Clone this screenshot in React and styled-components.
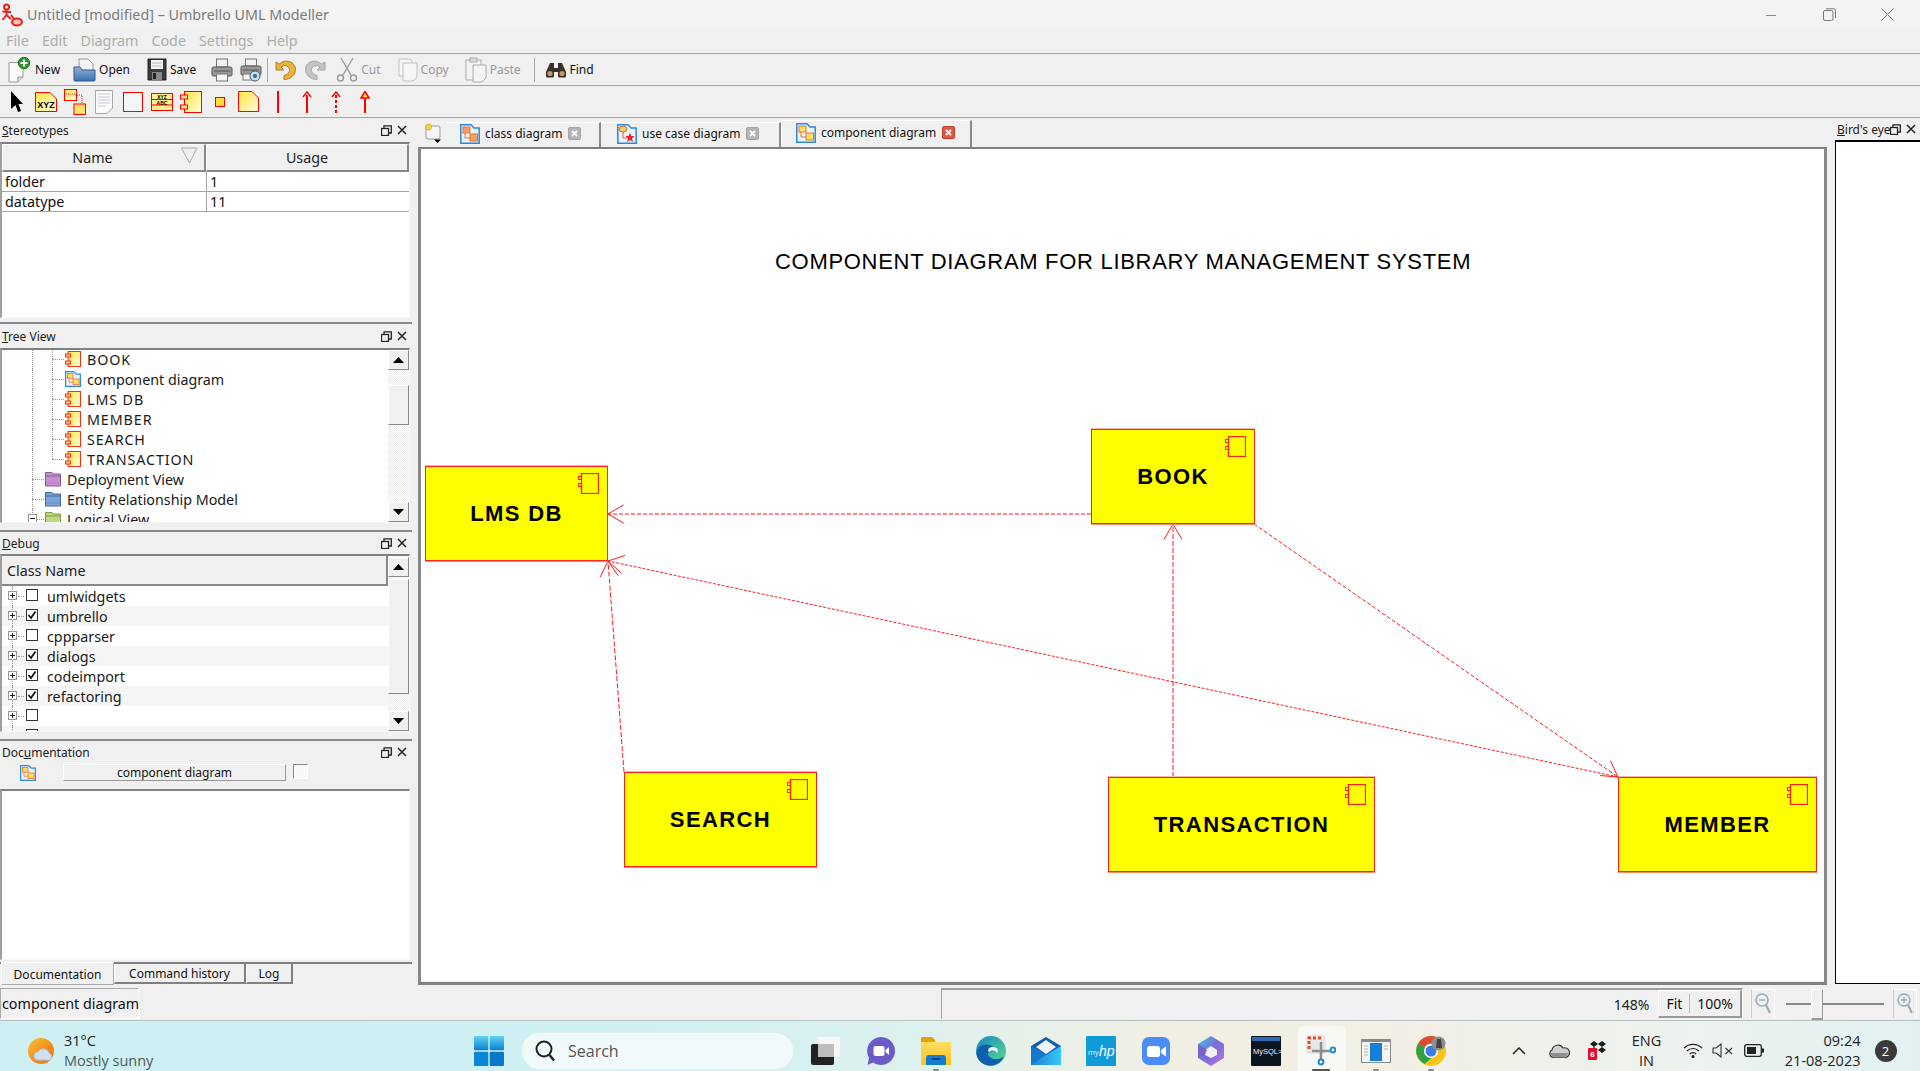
import React from "react";
import styled, { createGlobalStyle } from "styled-components";

const Global = createGlobalStyle`
  html, body { margin: 0; padding: 0; background: #f0f0f0; overflow: hidden; }
  * { box-sizing: border-box; }
  #root { width: 1920px; height: 1071px; }
`;
const UI = `"Noto Sans", "Open Sans", sans-serif`;

/* ---------- shell ---------- */
const Shell = styled.div`
  width: 1920px; height: 1071px; display: flex; flex-direction: column;
  background: #f0f0f0; font-family: ${UI}; color: #111; overflow: hidden; position: relative;
`;
const TitleBar = styled.div`
  height: 29px; display: flex; align-items: center; background: #f3f3f3; padding-right: 4px;
`;
const TitleText = styled.span`font-size: 14.3px; color: #7b7b7b; margin-left: 4px; white-space: nowrap;`;
const WindowControls = styled.div`display: flex; margin-left: auto;`;
const WinCell = styled.div`width: 58px; height: 29px; display: flex; align-items: center; justify-content: center;`;
const MenuBar = styled.div`
  height: 25px; display: flex; align-items: center; gap: 13px; padding: 0 0 1px 6px;
  border-bottom: 1px solid #a3a3a3; background: #f0f0f0;
`;
const MenuItem = styled.span`font-size: 14.3px; color: #adadad;`;
const Toolbar = styled.div`
  height: 32px; display: flex; align-items: center; padding-left: ${p => p.$pl || 0}px;
  border-bottom: 1px solid #a3a3a3; flex: none;
`;
const ToolAction = styled.div`
  display: flex; align-items: center; gap: 3px; margin-left: ${p => p.$ml || 0}px;
  font-size: 12px; color: ${p => (p.$off ? "#9a9a9a" : "#111")}; white-space: nowrap;
`;
const ToolSep = styled.div`width: 1px; height: 24px; background: #a8a8a8; margin-left: ${p => p.$ml}px;`;
const ToolSlot = styled.div`width: 29px; height: 30px; display: flex; align-items: center; justify-content: center;`;

const Workspace = styled.div`height: 867px; display: flex; flex: none;`;

/* ---------- docks ---------- */
const LeftDock = styled.div`width: 412px; display: flex; flex-direction: column; flex: none;`;
const DockTitle = styled.div`
  height: ${p => p.$h || 24}px; display: flex; align-items: center; padding: 0 ${p => p.$pr || 5}px 0 2px; font-size: 12px; color: #222; flex: none;
  u { text-underline-offset: 1px; }
`;
const DockName = styled.span`flex: 1; min-width: 0; overflow: hidden; white-space: nowrap;`;
const DockBtns = styled.div`display: flex; align-items: center; gap: 5px; flex: none;`;
const Pane = styled.div`
  height: ${p => p.$h}px; flex: none; background: #fff; display: flex; overflow: hidden; position: relative;
  border-top: 2px solid #808080; border-left: 2px solid #a0a0a0; border-right: 1px solid #f8f8f8; border-bottom: 1px solid #f8f8f8;
  margin-right: 2px;
`;
const Splitter = styled.div`
  height: ${p => p.$h}px; flex: none; border-bottom: 2px solid #8a8a8a;
`;
const THead = styled.div`display: grid; grid-template-columns: 204px 1fr; height: 28px; flex: none;`;
const TH = styled.div`
  background: #f0f0f0; font-size: 14.3px; display: flex; align-items: center; justify-content: center; position: relative;
  padding-right: ${p => p.$pr || 0}px;
  border-right: 2px solid #888; border-bottom: 2px solid #888; border-left: 1px solid #fff; border-top: 1px solid #fff; color: #222;
`;
const SortMark = styled.svg`position: absolute; right: 6px; top: 2px;`;
const TRow = styled.div`display: grid; grid-template-columns: 204px 1fr; height: 20px; border-bottom: 1px solid #a5a5a5; font-size: 14.3px; flex: none;`;
const TD = styled.div`padding-left: 3px; line-height: 19px; & + & { border-left: 1px solid #a5a5a5; }`;
const Col = styled.div`flex: 1; min-width: 0; display: flex; flex-direction: column;`;
const TreeBody = styled.div`flex: 1; margin-top: ${p => p.$mt ?? -1}px; min-width: 0; overflow: hidden;`;
const TreeRow = styled.div`
  height: 20px; display: flex; align-items: center; gap: 6px; padding-left: ${p => p.$in}px; font-size: 14.3px; color: #1a1a1a; white-space: nowrap; position: relative;
  letter-spacing: ${p => (p.$caps ? "0.9px" : "0")};
  background: ${p => (p.$alt ? "#f5f5f5" : "transparent")};
`;
const DebugLabel = styled.span`margin-left: 3px;`;
const Dotted = styled.i`
  position: absolute; left: ${p => p.$x}px; top: 0; bottom: ${p => (p.$end ? 10 : 0)}px; border-left: 1px dotted #999;
`;
const Tick = styled.i`
  position: absolute; left: ${p => p.$x}px; top: 10px; width: ${p => p.$w}px; border-top: 1px dotted #999;
`;
const Expander = styled.span`
  position: absolute; left: ${p => p.$x}px; top: 5px; width: 9px; height: 9px; border: 1px solid #999; background: #fff;
  &::before { content: ""; position: absolute; left: 1px; right: 1px; top: 3px; height: 1px; background: #222; }
  &::after { content: ""; display: ${p => (p.$open ? "none" : "block")}; position: absolute; top: 1px; bottom: 1px; left: 3px; width: 1px; background: #222; }
`;
const Check = styled.span`
  width: 12px; height: 12px; border: 1px solid #333; background: #fff; display: flex; align-items: center; justify-content: center; flex: none; margin-top: -2px;
`;
const ScrollBar = styled.div`
  width: 21px; flex: none; display: flex; flex-direction: column; align-items: stretch;
  background: repeating-conic-gradient(#fff 0 25%, #ececec 0 50%) 0 0 / 2px 2px;
`;
const ScrollBtn = styled.div`
  height: 20px; flex: none; display: flex; align-items: center; justify-content: center; background: #f0f0f0;
  border-top: 1px solid #fff; border-left: 1px solid #fff; border-right: 1px solid #888; border-bottom: 1px solid #888; margin-top: ${p => p.$mt || 0}px;
`;
const Thumb = styled.div`
  height: ${p => p.$h}px; flex: none; margin-top: ${p => p.$mt}px; background: #f0f0f0;
  border-top: 1px solid #fff; border-left: 1px solid #fff; border-right: 1px solid #888; border-bottom: 1px solid #888;
`;
const Fill = styled.div`flex: 1;`;
const DebugHead = styled.div`
  height: 30px; flex: none; background: #f0f0f0; font-size: 14.3px; padding-left: 5px; display: flex; align-items: center; color: #222;
  border-right: 2px solid #888; border-bottom: 2px solid #888;
`;
const DocHead = styled.div`height: 26px; flex: none; display: flex; align-items: flex-start; padding-top: 1px;`;
const DocIcon = styled.div`width: 16px; height: 17px; margin-left: 20px;`;
const DocBtn = styled.div`
  width: 223px; height: 17px; margin-left: 27px; font-size: 12px; line-height: 16px; text-align: center; color: #111;
  border-top: 1px solid #fff; border-left: 1px solid #fff; border-right: 1px solid #999; border-bottom: 1px solid #999;
`;
const DocCheck = styled.div`width: 15px; height: 15px; margin-left: 7px; background: #f8f8f8; border-top: 1px solid #888; border-left: 1px solid #888; border-right: 1px solid #fff; border-bottom: 1px solid #fff;`;
const BottomTabs = styled.div`
  height: 25px; flex: none; display: flex; align-items: flex-start; margin-top: 2px; border-top: 2px solid #808080; padding-left: 1px;
`;
const BottomTab = styled.div`
  height: ${p => (p.$on ? 23 : 20)}px; width: ${p => p.$w}px; font-size: 12px; text-align: center; color: #111; background: #f0f0f0;
  line-height: ${p => (p.$on ? 23 : 19)}px; margin-top: ${p => (p.$on ? -2 : 0)}px;
  border-left: 1px solid #fff; border-right: 2px solid #808080; border-bottom: 2px solid #808080;
  border-top: ${p => (p.$on ? "1px solid #fff" : "none")};
  ${p => p.$on && "border-right: 1px solid #aaa; border-bottom: 1px solid #aaa;"}
`;

/* ---------- centre ---------- */
const Central = styled.div`width: 1410px; margin-left: 6px; flex: none; display: flex; flex-direction: column;`;
const TabBar = styled.div`height: 29px; flex: none; display: flex; align-items: flex-end; padding-left: 6px;`;
const CornerBtn = styled.div`width: 18px; height: 22px; margin: 0 5px 3px 0; flex: none;`;
const DocTab = styled.div`
  width: ${p => p.$w}px; height: ${p => (p.$on ? 27 : 25)}px; display: flex; align-items: center; flex: none; padding-left: ${p => p.$pl}px; gap: 5px;
  font-size: 12px; color: #111; white-space: nowrap; padding-bottom: 3px;
  border-right: 2px solid #8a8a8a; border-left: ${p => (p.$on ? "1px solid #fff" : "none")}; border-top: 1px solid #fff;
`;
const TabClose = styled.span`
  width: 13px; height: 13px; border-radius: 2px; background: ${p => (p.$on ? "#e25a45" : "#b5b5b5")}; margin-left: 1px;
  display: flex; align-items: center; justify-content: center; flex: none; border: 1px solid ${p => (p.$on ? "#c03b28" : "#a5a5a5")};
`;
const Canvas = styled.div`
  width: 1409px; height: 838px; position: relative; background: #fff; flex: none;
  border-left: 3px solid #888; border-top: 2px solid #808080; border-right: 3px solid #888; border-bottom: 3px solid #808080;
  box-shadow: inset 0 -1px 0 #eee; overflow: hidden;
`;
const Wires = styled.svg`position: absolute; left: 0; top: 0;`;
const DiagramTitle = styled.div`
  position: absolute; left: ${p => p.$x}px; top: ${p => p.$y}px; font-family: "Liberation Sans", Arial, sans-serif;
  font-size: 22px; letter-spacing: 0.7px; color: #000; white-space: nowrap;
`;
const UmlNode = styled.div`
  position: absolute; left: ${p => p.$x}px; top: ${p => p.$y}px; width: ${p => p.$w}px; height: ${p => p.$h}px;
  background: #ffff00; border: 1px solid #ff1f1f; box-shadow: 0 1px 0 #ff8a70, 0 -1px 0 #ffb0b0;
  display: flex; align-items: center; justify-content: center;
  font-family: "Liberation Sans", Arial, sans-serif; font-weight: 700; font-size: 22px; letter-spacing: 1.4px; color: #000; white-space: nowrap;
`;
const NodeGlyph = styled.svg`position: absolute; right: 8px; top: 6px;`;

const RightDock = styled.div`flex: 1; min-width: 0; margin-left: 7px; display: flex; flex-direction: column;`;
const BirdPane = styled.div`flex: 1; background: #fff; border: 1px solid #000; border-right: none; margin-bottom: 1px; border-top: 2px solid #000;`;

/* ---------- status ---------- */
const StatusBar = styled.div`height: 35px; flex: none; display: flex; align-items: center; padding-top: 1px;`;
const StatusLabel = styled.div`
  width: 139px; height: 31px; font-size: 14.3px; line-height: 29px; padding-left: 1px; white-space: nowrap; color: #111;
  border-top: 1px solid #aaa; border-left: 1px solid #aaa; border-right: 1px solid #fff; border-bottom: 1px solid #fff;
`;
const StatusGroup = styled.div`
  width: 802px; height: 31px; margin-left: 802px; display: flex; align-items: center; justify-content: flex-end; font-size: 14px; padding-right: 0;
  border-top: 2px solid #a0a0a0; border-left: 1px solid #a0a0a0; border-right: 1px solid #fff;
`;
const Percent = styled.span`margin-right: 9px; color: #222;`;
const ZoomBtns = styled.div`display: flex; height: 28px; align-items: center; border-right: 2px solid #999; border-bottom: 2px solid #999; border-top: 1px solid #fff; border-left: 1px solid #fff;`;
const ZoomBtn = styled.span`padding: 0 7px; & + & { border-left: 1px solid #bbb; }`;
const ZoomIconBtn = styled.div`
  width: ${p => p.$w}px; height: 29px; margin-left: ${p => p.$ml}px; display: flex; align-items: center; justify-content: center;
  border-left: 1px solid #ccc; border-right: 1px solid #fff; border-top: 1px solid #fff; flex: none;
`;
const ZoomSlider = styled.div`
  width: 100px; height: 29px; margin-left: 9px; position: relative; flex: none;
  &::before { content: ""; position: absolute; left: 2px; right: 0; top: 14px; height: 2px; background: #888; }
`;
const SliderKnob = styled.div`position: absolute; left: 27px; top: 0; width: 12px; height: 31px; background: #f0f0f0; border: 1px solid #fff; border-right-color: #999; border-bottom: 2px solid #999;`;

/* ---------- taskbar ---------- */
const Taskbar = styled.div`
  height: 51px; flex: none; display: flex; align-items: center; padding-top: 9px;
  background: linear-gradient(90deg, #cff0f3 0%, #d0f0f3 36%, #def1ee 48%, #f1efe3 60%, #f2efe5 72%, #edf2ee 88%, #e1f1f2 100%);
  border-top: 1px solid #b6c2c2;
`;
const Weather = styled.div`width: 474px; flex: none; display: flex; align-items: center; padding-left: 27px; gap: 9px;`;
const WeatherText = styled.div`display: flex; flex-direction: column; font-size: 14.5px; line-height: 20px; font-family: "Open Sans", sans-serif;`;
const WeatherTemp = styled.span`color: #222;`;
const WeatherSub = styled.span`color: #4a5a5e;`;
const SearchBox = styled.div`
  width: 273px; height: 38px; margin-left: 17px; border-radius: 19px; background: #f1fafa; border: 1px solid #e2efef; flex: none;
  display: flex; align-items: center; padding-left: 12px; gap: 12px; font-size: 16px; color: #555; font-family: "Open Sans", sans-serif;
`;
const AppRow = styled.div`display: flex; margin: -9px 0 0 4.5px; flex: none;`;
const AppCell = styled.div`
  width: 55px; height: 50px; display: flex; align-items: center; justify-content: center; position: relative; padding-top: 9px;
  ${p => p.$on && "&::before { content: ''; position: absolute; left: 4px; right: 3px; top: 5px; bottom: 0; background: #f8f8f4; border-radius: 5px 5px 0 0; }"}
  svg { position: relative; }
`;
const RunDot = styled.i`
  position: absolute; left: 50%; bottom: 0; width: ${p => (p.$wide ? 18 : 6)}px; height: 2px; margin-left: ${p => (p.$wide ? -9 : -3)}px; background: ${p => (p.$wide ? "#555" : "#888")}; border-radius: 1px;
`;
const TrayCell = styled.div`
  width: ${p => p.$w}px; margin-left: ${p => p.$ml || 0}px; flex: none; display: flex; flex-direction: column; align-items: ${p => p.$end ? "flex-end" : "center"}; justify-content: center;
  font-size: 14.5px; line-height: 20px; color: #222; font-family: "Open Sans", sans-serif;
`;
const Badge = styled.div`width: 22px; height: 22px; border-radius: 50%; background: #3a3a3a; color: #fff; font-size: 13px; line-height: 22px; text-align: center;`;

/* ---------- icons ---------- */
const Defs = () => (
  <svg width="0" height="0" style={{ position: "absolute" }}>
    <defs>
      <linearGradient id="gy" x1="0" y1="0" x2="1" y2="1"><stop offset="0" stopColor="#ffe640" /><stop offset="1" stopColor="#fffde0" /></linearGradient>
      <linearGradient id="gblue" x1="0" y1="0" x2="0" y2="1"><stop offset="0" stopColor="#8db4dc" /><stop offset="1" stopColor="#3f70a8" /></linearGradient>
      <linearGradient id="gedge" x1="0" y1="0" x2="1" y2="1"><stop offset="0" stopColor="#1a86c8" /><stop offset="1" stopColor="#5be08a" /></linearGradient>
      <linearGradient id="gfold" x1="0" y1="0" x2="0" y2="1"><stop offset="0" stopColor="#ffdd66" /><stop offset="1" stopColor="#fcc31c" /></linearGradient>
      <linearGradient id="gstart" x1="0" y1="0" x2="0" y2="1"><stop offset="0" stopColor="#5fd3f5" /><stop offset="1" stopColor="#0a7fd0" /></linearGradient>
      <linearGradient id="gsun" x1="0" y1="0" x2="1" y2="1"><stop offset="0" stopColor="#f8c030" /><stop offset="1" stopColor="#f06a10" /></linearGradient>
      <linearGradient id="gcop" x1="0" y1="0" x2="1" y2="1"><stop offset="0" stopColor="#3ec8e8" /><stop offset=".5" stopColor="#7a6ad8" /><stop offset="1" stopColor="#c07ad8" /></linearGradient>
      <linearGradient id="gmail" x1="0" y1="0" x2="1" y2="0"><stop offset="0" stopColor="#1a80d8" /><stop offset="1" stopColor="#38c8f8" /></linearGradient>
    </defs>
  </svg>
);
const AppLogo = () => (
  <svg width="22" height="24" viewBox="0 0 22 24" fill="none" stroke="#e8231f" strokeWidth="2" style={{ marginLeft: 1 }}>
    <circle cx="5.5" cy="4" r="2.5" /><path d="M5.5 6.5 V12 M1.5 8.5 L10 9 M5.5 12 L1.5 17 M5.5 12 L10 16" />
    <ellipse cx="16" cy="19" rx="5" ry="3.5" fill="#ffc0b0" /><path d="M10 12 L13 16" />
  </svg>
);
const MinGlyph = () => <svg width="12" height="12"><path d="M1 6.5H11" stroke="#888" /></svg>;
const RestoreGlyph = () => <svg width="13" height="13" fill="none" stroke="#777"><rect x="0.5" y="2.5" width="9.5" height="10" rx="1.5" /><path d="M3 .8H10.5A2 2 0 0 1 12.5 2.8V10" /></svg>;
const CloseGlyph = () => <svg width="13" height="13"><path d="M.5.5 12.5 12.5M12.5.5.5 12.5" stroke="#777" /></svg>;
const NewIc = () => (
  <svg width="24" height="26" viewBox="0 0 24 26"><path d="M1 5.5H15V20L10 25H1Z" fill="#fafafa" stroke="#999" /><path d="M10 25V20H15" fill="#ddd" stroke="#999" /><circle cx="16" cy="6" r="5.7" fill="#2d9a30" stroke="#1d7020" /><path d="M16 2.5V9.5M12.5 6H19.5" stroke="#fff" strokeWidth="2" /></svg>
);
const OpenIc = () => (
  <svg width="23" height="24" viewBox="0 0 23 24"><path d="M6 1H15L20 6V14H6Z" fill="#f4f4f4" stroke="#9a9a9a" /><path d="M1 9H7L9 12H22V22A1 1 0 0 1 21 23H2A1 1 0 0 1 1 22Z" fill="url(#gblue)" stroke="#2d5a90" /></svg>
);
const SaveIc = () => (
  <svg width="20" height="23" viewBox="0 0 20 23"><path d="M1 1H19V22H1Z" fill="#3a3a3a" stroke="#222" /><rect x="4" y="2" width="12" height="9" fill="#f4f4f4" /><path d="M5 5H15M5 8H15" stroke="#bbb" /><rect x="5" y="14" width="10" height="8" fill="#888" /><rect x="6" y="15" width="3" height="6" fill="#222" /></svg>
);
const PrintIc = () => (
  <svg width="22" height="24" viewBox="0 0 22 24"><rect x="5.5" y="1" width="11" height="8" fill="#f2f2f2" stroke="#777" /><rect x="1" y="9" width="20" height="9" rx="1.5" fill="#999" stroke="#555" /><path d="M3 13H19" stroke="#555" /><rect x="5.5" y="16" width="11" height="7" fill="#f6f6f6" stroke="#777" /></svg>
);
const PreviewIc = () => (
  <svg width="22" height="24" viewBox="0 0 22 24"><rect x="5.5" y="1" width="11" height="7" fill="#f2f2f2" stroke="#777" /><rect x="1" y="8" width="20" height="9" rx="1.5" fill="#999" stroke="#555" /><path d="M3 12H19" stroke="#555" /><rect x="3" y="16" width="10" height="6" fill="#f6f6f6" stroke="#777" /><circle cx="15" cy="18" r="5" fill="#cfe4f0" stroke="#456" /><circle cx="15" cy="18" r="2.2" fill="#2a78b8" /></svg>
);
const GrayFlip = styled.svg`transform: ${p => (p.$flip ? "scaleX(-1)" : "none")};`;
const UndoIc = ({ gray }) => (
  <GrayFlip $flip={gray} width="23" height="22" viewBox="0 0 23 22">
    <path d="M2 3V11H10L7 8C10 5.500 15 6.500 15.500 10.500C15.900 13.500 13 16 10 16.500V20.500C16 20.500 21.500 16.500 21.500 10.500C21.500 3 12 -1 5.500 5Z" fill={gray ? "#c4c4c4" : "#eab23c"} stroke={gray ? "#a8a8a8" : "#b5801a"} />
  </GrayFlip>
);
const CutIc = () => (
  <svg width="22" height="26" viewBox="0 0 22 26" fill="none" stroke="#9a9a9a" strokeWidth="1.4"><path d="M5 1 15 18M17 1 7 18" /><circle cx="4.500" cy="21" r="3" /><circle cx="17.500" cy="21" r="3" /></svg>
);
const CopyIc = () => (
  <svg width="20" height="24" viewBox="0 0 20 24" fill="#f6f6f6" stroke="#c0c0c0"><path d="M1 1H12L14 3V18H1Z" /><path d="M5 5H19V19L15 23H5Z" /></svg>
);
const PasteIc = () => (
  <svg width="22" height="26" viewBox="0 0 22 26" fill="#f4f4f4" stroke="#aaa"><rect x="1" y="3" width="15" height="20" /><rect x="5" y="1" width="7" height="4" fill="#ddd" /><path d="M8 8H21V21L17 25H8Z" /></svg>
);
const BinocIc = () => (
  <svg width="22" height="16" viewBox="0 0 22 16"><path d="M5 1H9V6H13V1H17L21 10V14A1.500 1.500 0 0 1 19.500 15.500H14.500A1.500 1.500 0 0 1 13 14V10H9V14A1.500 1.500 0 0 1 7.500 15.500H2.500A1.500 1.500 0 0 1 1 14V10Z" fill="#3b3028" /><circle cx="5" cy="11.500" r="2.600" fill="#c49a6a" /><circle cx="17" cy="11.500" r="2.600" fill="#c49a6a" /></svg>
);
const Pointer = () => <svg width="12" height="21" viewBox="0 0 12 21"><path d="M0 0 12 13H7.500L10 20 7 21 4.500 14 0 18Z" fill="#000" /></svg>;
const NoteXYZ = () => (
  <svg width="22" height="20" viewBox="0 0 22 20"><path d="M.5 .5H15L21.500 7V19.500H.5Z" fill="url(#gy)" stroke="#f00" /><text x="11" y="16" textAnchor="middle" fontFamily="Liberation Sans" fontWeight="700" fontSize="9" fill="#000">XYZ</text></svg>
);
const ObjPair = () => (
  <svg width="22" height="26" viewBox="0 0 22 26"><rect x=".5" y=".5" width="12" height="11" fill="url(#gy)" stroke="#f00" /><rect x="10" y="15" width="11.500" height="10.500" fill="#ffe070" stroke="#f00" /><path d="M2 5H11M11 6H18V14" stroke="#d22" strokeDasharray="1 1" fill="none" /></svg>
);
const GrayNote = () => <svg width="18" height="24" viewBox="0 0 18 24"><path d="M.5 .5H17.500V18L12 23.500H.5Z" fill="#fafafa" stroke="#a8a8a8" /><path d="M3 4H15M3 7H15M3 10H15M3 13H15M3 16H11" stroke="#ccd" /></svg>;
const RedBox = () => <svg width="20" height="20"><rect x=".5" y=".5" width="19" height="19" fill="#f5f5f5" stroke="#f00" /></svg>;
const ClassBox = () => (
  <svg width="22" height="18" viewBox="0 0 22 18"><rect x=".5" y=".5" width="21" height="17" fill="#ffef90" stroke="#f00" /><path d="M.5 6.500H21.500M.5 12H21.500" stroke="#f00" /><text x="11" y="5.500" textAnchor="middle" fontSize="5" fontWeight="700" fontFamily="Liberation Sans">XYZ</text><text x="11" y="11.500" textAnchor="middle" fontSize="5" fontWeight="700" fontFamily="Liberation Sans">ABC</text></svg>
);
const CompBig = () => (
  <svg width="22" height="22" viewBox="0 0 22 22"><rect x="4.500" y=".5" width="17" height="21" fill="url(#gy)" stroke="#f00" /><rect x=".5" y="4" width="7" height="4" fill="#ffe090" stroke="#f00" /><rect x=".5" y="14" width="7" height="4" fill="#ffe090" stroke="#f00" /></svg>
);
const SmallSq = () => <svg width="10" height="10"><rect x=".5" y=".5" width="9" height="9" fill="#ffdc40" stroke="#f00" /></svg>;
const FoldNote = () => <svg width="21" height="21" viewBox="0 0 21 21"><path d="M.5 .5H14L20.500 7V20.500H.5Z" fill="url(#gy)" stroke="#f00" /></svg>;
const RedLine = () => <svg width="4" height="22"><path d="M2 0V22" stroke="#f00" strokeWidth="2" /></svg>;
const RedArrow = ({ dash, tri }) => (
  <svg width="12" height="22" viewBox="0 0 12 22" fill="none" stroke="#f00">
    <path d="M6 4V22" strokeWidth="2" strokeDasharray={dash ? "3 2" : undefined} />
    {tri ? <path d="M6 .5 10 7H2Z" fill="#ffdc40" strokeWidth="1.500" /> : <path d="M2 6 6 1 10 6" strokeWidth="1.500" />}
  </svg>
);
const MiniDock = () => (
  <DockBtns>
    <svg width="11" height="11" fill="none" stroke="#222"><rect x=".5" y="3.500" width="7" height="7" strokeWidth="1.300" /><path d="M3 3V.8H10.300V8H8" strokeWidth="1.300" /></svg>
    <svg width="10" height="10"><path d="M1 1 9 9M9 1 1 9" stroke="#222" strokeWidth="1.500" /></svg>
  </DockBtns>
);
const DiagramIc = ({ s = 20, kind = "comp" }) => (
  <svg width={s} height={s} viewBox="0 0 20 20">
    <path d="M.8 .8H11L14 4H19.200V19.200H.8Z" fill="#e8f4fc" stroke="#2b88dc" strokeWidth="1.500" />
    {kind === "use" ? (
      <>
        <ellipse cx="6" cy="5" rx="4" ry="3" fill="#f2cf60" stroke="#d06a2a" />
        <path d="M6 8V14H10" stroke="#e55" fill="none" />
        <path d="M13 9 14.500 12H17.500L15 14.500 16 18 13 16 10 18 11 14.500 8.500 12H11.500Z" fill="#f02020" />
      </>
    ) : (
      <>
        <rect x="3" y="3" width="7" height="6" fill={kind === "class" ? "#f0a070" : "#ffe060"} stroke="#f0702a" />
        <rect x="10" y="10" width="7.500" height="7" fill={kind === "class" ? "#f0a070" : "#ffe060"} stroke="#f0702a" />
        <path d="M5 9V14H10" stroke="#f0702a" fill="none" />
      </>
    )}
  </svg>
);
const TreeComp = () => (
  <svg width="16" height="16" viewBox="0 0 16 16"><rect x="3" y=".5" width="12.500" height="15" fill="url(#gy)" stroke="#f0361a" /><rect x=".5" y="3" width="5" height="3" fill="#ffc080" stroke="#f0361a" /><rect x=".5" y="10" width="5" height="3" fill="#ffc080" stroke="#f0361a" /></svg>
);
const Folder = ({ c, d }) => (
  <svg width="16" height="16" viewBox="0 0 16 16"><path d="M.5 1.500H7L8 3H15.500V15H.5Z" fill={c} stroke={d} /><path d="M.5 5H15.500" stroke={d} /><path d="M.5 12H15.500" stroke={d} opacity=".3" /></svg>
);
const Up = () => <svg width="11" height="6"><path d="M5.500 0 11 6H0Z" fill="#000" /></svg>;
const Down = () => <svg width="11" height="6"><path d="M5.500 6 11 0H0Z" fill="#000" /></svg>;
const Tick2 = () => <svg width="10" height="10"><path d="M1.500 5 4 8 8.500 1.500" fill="none" stroke="#111" strokeWidth="1.800" /></svg>;
const TabX = () => <svg width="7" height="7"><path d="M1 1 6 6M6 1 1 6" stroke="#fff" strokeWidth="1.800" /></svg>;
const Lens = ({ plus }) => (
  <svg width="16" height="22" viewBox="0 0 16 22" fill="none" stroke="#a0a8b0" strokeWidth="1.500"><circle cx="7" cy="7" r="6" fill="#eef2f6" /><path d="M4 7H10" />{plus && <path d="M7 4V10" />}<path d="M11 12 15 20" strokeWidth="2.200" /></svg>
);
const CornerIc = () => (
  <svg width="18" height="22" viewBox="0 0 18 22"><rect x="2" y="4" width="14" height="13" rx="2" fill="#f6f6f6" stroke="#999" /><circle cx="4.500" cy="5" r="3" fill="#f4d34a" stroke="#d8b030" /><path d="M10 17.500H17L13.500 21Z" fill="#000" /></svg>
);

/* taskbar icons */
const SunIc = () => (
  <svg width="28" height="28" viewBox="0 0 28 28"><circle cx="14" cy="14" r="13" fill="url(#gsun)" /><path d="M11 23A4 4 0 0 1 11 15 6 6 0 0 1 22 16 4 4 0 0 1 23 23Z" fill="#cfe0f4" stroke="#a7c3e8" /></svg>
);
const StartIc = () => (
  <svg width="30" height="30"><rect x="0" y="0" width="14.300" height="14.300" fill="url(#gstart)" rx="1" /><rect x="15.700" y="0" width="14.300" height="14.300" fill="url(#gstart)" rx="1" /><rect x="0" y="15.700" width="14.300" height="14.300" fill="#0c86d8" rx="1" /><rect x="15.700" y="15.700" width="14.300" height="14.300" fill="#0a78c8" rx="1" /></svg>
);
const Glass = () => <svg width="22" height="24" viewBox="0 0 22 24" fill="none" stroke="#222" strokeWidth="2"><circle cx="10" cy="10" r="7.500" /><path d="M15.500 16 20 21.500" strokeWidth="2.500" /></svg>;
const TaskView = () => (
  <svg width="30" height="30"><rect x="0" y="8" width="23" height="21" rx="2" fill="#222" /><rect x="7" y="1" width="22" height="20" rx="1" fill="#f6f6f6" /><rect x="7" y="8" width="16" height="13" fill="#bdbdbd" /></svg>
);
const ChatIc = () => (
  <svg width="30" height="30" viewBox="0 0 30 30"><path d="M15 1A14 14 0 1 1 7 26.500L1.500 29 3 22A14 14 0 0 1 15 1Z" fill="#6b5bc8" /><rect x="7.500" y="10" width="11" height="10" rx="2" fill="#fff" /><path d="M19.500 14 23 11V19L19.500 16Z" fill="#fff" /></svg>
);
const FolderIc = () => (
  <svg width="30" height="28" viewBox="0 0 30 28"><path d="M0 1A1 1 0 0 1 1 0H11L14 3V9H0Z" fill="#e2a308" /><path d="M0 5H29A1 1 0 0 1 30 6V27A1 1 0 0 1 29 28H1A1 1 0 0 1 0 27Z" fill="url(#gfold)" /><path d="M5 21A3 3 0 0 1 8 18H22A3 3 0 0 1 25 21V28H5Z" fill="#0f7ed0" /><rect x="11" y="21" width="8" height="2" fill="#0c3d78" /></svg>
);
const EdgeIc = () => (
  <svg width="30" height="30" viewBox="0 0 30 30"><circle cx="15" cy="15" r="15" fill="url(#gedge)" /><path d="M0.500 17C1.500 8 9 8 13 9 20 10 18 16 14 16 11 16 11 20 15 22 20 24.500 25 23 28 20 25 28 17 31 10 29 4 27 .5 22 .5 17Z" fill="#0e5faf" /><path d="M13 16C10.500 13 14 11 17 11 22 11 23 15 21 17 20 14 16 13.500 13 16Z" fill="#e9f6f4" /></svg>
);
const MailIc = () => (
  <svg width="30" height="28" viewBox="0 0 30 28"><path d="M15 0 30 9V28H0V9Z" fill="#0f5fae" /><path d="M5 10 15 3 25 10 15 17Z" fill="#f2f6fa" /><path d="M0 9 15 18 30 9V28H0Z" fill="url(#gmail)" /><path d="M0 28 15 18 0 9Z" fill="#1478d0" /></svg>
);
const HpIc = () => (
  <svg width="30" height="30"><rect width="30" height="30" rx="1" fill="#0f9ad8" /><text x="2" y="19" fontSize="8" fontFamily="Liberation Sans" fill="#d8f0fa">my</text><text x="13" y="20" fontSize="14" fontStyle="italic" fontFamily="Liberation Sans" fill="#fff">hp</text></svg>
);
const ZoomIc = () => (
  <svg width="28" height="28"><rect width="28" height="28" rx="7" fill="#4a8cfa" /><rect x="5" y="9" width="13" height="11" rx="2.500" fill="#fff" /><path d="M19 13 24 9.500V19.500L19 16Z" fill="#fff" /></svg>
);
const CopilotIc = () => (
  <svg width="28" height="30" viewBox="0 0 28 30"><path d="M14 0 27 8V22L14 30 1 22V8Z" fill="url(#gcop)" /><path d="M14 10 20 14V19L14 22 8 19V14Z" fill="#eef2f0" /><path d="M1 8 10 14 8 19 1 22Z" fill="#7a5ac8" opacity=".8" /></svg>
);
const MysqlIc = () => (
  <svg width="30" height="30"><rect width="30" height="30" rx="1" fill="#0b1520" /><rect x="1" y="1" width="28" height="4" fill="#2a6ab0" /><text x="2" y="18" fontSize="7.500" fontFamily="Liberation Sans" fill="#eee">MySQL&gt;</text></svg>
);
const SnipIc = () => (
  <svg width="30" height="32" viewBox="0 0 30 32" fill="none"><rect x="0" y="0" width="20" height="19" rx="3" fill="#e4e8ea" /><path d="M3 14V3H15" stroke="#e54a20" strokeWidth="3" strokeDasharray="3 2" /><path d="M15 7V24M6 16H25" stroke="#8a8f94" strokeWidth="2.500" /><circle cx="27" cy="15" r="2.400" stroke="#1a8ad8" strokeWidth="2" /><circle cx="15" cy="27" r="2.400" stroke="#1a8ad8" strokeWidth="2" /></svg>
);
const BlueWin = () => (
  <svg width="30" height="24"><rect x=".5" y=".5" width="29" height="23" fill="#f4f4f4" stroke="#8a8a8a" /><rect x="1" y="1" width="28" height="2" fill="#8a8a8a" /><rect x="9" y="4" width="12" height="18" fill="#1680d8" /><path d="M3 7H7M3 10H7M3 13H7M3 16H7M23 7H27M23 10H27" stroke="#b5b5b5" /></svg>
);
const ChromeIc = () => (
  <svg width="30" height="30" viewBox="0 0 30 30"><circle cx="15" cy="15" r="15" fill="#f5c518" /><path d="M15 0A15 15 0 0 1 28 7.500H15A7.500 7.500 0 0 0 8.500 11.200L2 7.500A15 15 0 0 1 15 0Z" fill="#dd4b38" /><path d="M2 7.500 8.500 11.200 15 22.500 8.500 28A15 15 0 0 1 2 7.500Z" fill="#2ea24a" /><circle cx="15" cy="15" r="7" fill="#fff" /><circle cx="15" cy="15" r="5.500" fill="#3b7de8" /><circle cx="22.500" cy="7.500" r="7" fill="#8a8f90" /><path d="M21 3H25L26 12H20Z" fill="#4a4038" /></svg>
);
const Chevron = () => <svg width="14" height="8"><path d="M1 7 7 1 13 7" fill="none" stroke="#222" strokeWidth="1.500" /></svg>;
const CloudIc = () => (
  <svg width="22" height="15" viewBox="0 0 22 15"><path d="M5 14.500A4 4 0 0 1 4 7 6 6 0 0 1 15 5 4.500 4.500 0 0 1 18 14.500Z" fill="#d0d0d0" stroke="#3a3a3a" strokeWidth="1.200" /><path d="M2 10 H20 L18 14.500H5Z" fill="#8f8f8f" /></svg>
);
const DropIc = () => (
  <svg width="20" height="19" viewBox="0 0 20 19"><path d="M6 0 10 3 6 6 2 3ZM14 0 18 3 14 6 10 3ZM6 6 10 9 6 12 2 9ZM14 6 18 9 14 12 10 9Z" fill="#1a1a1a" /><rect x="0" y="7" width="9" height="12" rx="1" fill="#e0102c" /><text x="4.500" y="16" textAnchor="middle" fontSize="8" fontWeight="700" fontFamily="Liberation Sans" fill="#fff">6</text></svg>
);
const WifiIc = () => <svg width="20" height="15" viewBox="0 0 20 15" fill="none" stroke="#222" strokeWidth="1.200"><path d="M1 5A13 13 0 0 1 19 5M4 8A8.500 8.500 0 0 1 16 8M6.800 11A4.500 4.500 0 0 1 13.200 11" /><circle cx="10" cy="13.500" r="1" fill="#222" /></svg>;
const SpeakerIc = () => <svg width="22" height="15" viewBox="0 0 22 15" fill="none" stroke="#333" strokeWidth="1.100"><path d="M1 5V10H4L9 14V1L4 5Z" /><path d="M13.500 5 20 11M20 5 13.500 11" /></svg>;
const BattIc = () => <svg width="20" height="13" viewBox="0 0 20 13"><rect x=".7" y=".7" width="16.600" height="11.600" rx="2" fill="none" stroke="#222" strokeWidth="1.300" /><rect x="3" y="3" width="9" height="7" fill="#222" /><rect x="18" y="4.500" width="2" height="4" fill="#222" /></svg>;

/* ---------- diagram data (canvas origin at 421,149 on the page) ---------- */
const OX = 421, OY = 149;
const nodes = [
  { id: "LMS DB", x: 425, y: 466, r: 608, b: 561 },
  { id: "BOOK", x: 1091, y: 429, r: 1255, b: 524 },
  { id: "SEARCH", x: 624, y: 772, r: 817, b: 867 },
  { id: "TRANSACTION", x: 1108, y: 777, r: 1375, b: 872 },
  { id: "MEMBER", x: 1618, y: 777, r: 1817, b: 872 },
];
const links = [
  [1091, 514, 608, 514, "4 2"],
  [1173, 777, 1173, 524, "5 2"],
  [624, 772, 608, 561, "5 2"],
  [1618, 777, 608, 561, "3 1.5"],
  [1254, 524, 1618, 777, "4 2"],
];
const head = (x1, y1, x2, y2) => {
  const dx = x1 - x2, dy = y1 - y2, l = Math.hypot(dx, dy), ux = dx / l, uy = dy / l;
  const L = 15.5, W = 9;
  const a = [x2 + ux * L - uy * W, y2 + uy * L + ux * W];
  const b = [x2 + ux * L + uy * W, y2 + uy * L - ux * W];
  return `M${a[0]} ${a[1]}L${x2} ${y2}L${b[0]} ${b[1]}`;
};

const treeItems = [
  ["BOOK", "c", true], ["component diagram", "d", false], ["LMS DB", "c", true], ["MEMBER", "c", true], ["SEARCH", "c", true], ["TRANSACTION", "c", true],
];
const debugItems = [
  ["umlwidgets", false], ["umbrello", true], ["cppparser", false], ["dialogs", true], ["codeimport", true], ["refactoring", true], ["", false], ["", true],
];

export default function App() {
  return (
    <Shell>
      <Global />
      <Defs />
      <TitleBar>
        <AppLogo />
        <TitleText>Untitled [modified] – Umbrello UML Modeller</TitleText>
        <WindowControls>
          <WinCell><MinGlyph /></WinCell>
          <WinCell><RestoreGlyph /></WinCell>
          <WinCell><CloseGlyph /></WinCell>
        </WindowControls>
      </TitleBar>
      <MenuBar>
        {["File", "Edit", "Diagram", "Code", "Settings", "Help"].map(m => <MenuItem key={m}>{m}</MenuItem>)}
      </MenuBar>
      <Toolbar $pl={8}>
        <ToolAction><NewIc />New</ToolAction>
        <ToolAction $ml={13}><OpenIc />Open</ToolAction>
        <ToolAction $ml={17}><SaveIc />Save</ToolAction>
        <ToolAction $ml={15}><PrintIc /></ToolAction>
        <ToolAction $ml={7}><PreviewIc /></ToolAction>
        <ToolSep $ml={5} />
        <ToolAction $ml={6}><UndoIc /></ToolAction>
        <ToolAction $ml={7}><UndoIc gray /></ToolAction>
        <ToolAction $ml={9} $off><CutIc />Cut</ToolAction>
        <ToolAction $ml={17} $off><CopyIc />Copy</ToolAction>
        <ToolAction $ml={16} $off><PasteIc />Paste</ToolAction>
        <ToolSep $ml={13} />
        <ToolAction $ml={10}><BinocIc />Find</ToolAction>
      </Toolbar>
      <Toolbar $pl={2}>
        <ToolSlot><Pointer /></ToolSlot>
        <ToolSlot><NoteXYZ /></ToolSlot>
        <ToolSlot><ObjPair /></ToolSlot>
        <ToolSlot><GrayNote /></ToolSlot>
        <ToolSlot><RedBox /></ToolSlot>
        <ToolSlot><ClassBox /></ToolSlot>
        <ToolSlot><CompBig /></ToolSlot>
        <ToolSlot><SmallSq /></ToolSlot>
        <ToolSlot><FoldNote /></ToolSlot>
        <ToolSlot><RedLine /></ToolSlot>
        <ToolSlot><RedArrow /></ToolSlot>
        <ToolSlot><RedArrow dash /></ToolSlot>
        <ToolSlot><RedArrow tri /></ToolSlot>
      </Toolbar>

      <Workspace>
        <LeftDock>
          <DockTitle>
            <DockName><u>S</u>tereotypes</DockName><MiniDock />
          </DockTitle>
          <Pane $h={176}>
            <Col>
              <THead>
                <TH $pr={22}>Name
                  <SortMark width="17" height="17" fill="none" stroke="#aaa"><path d="M.5 1H16L8.500 16Z" /></SortMark>
                </TH>
                <TH>Usage</TH>
              </THead>
              <TRow><TD>folder</TD><TD>1</TD></TRow>
              <TRow><TD>datatype</TD><TD>11</TD></TRow>
            </Col>
          </Pane>
          <Splitter $h={6} />
          <DockTitle>
            <DockName><u>T</u>ree View</DockName><MiniDock />
          </DockTitle>
          <Pane $h={175}>
            <TreeBody>
              {treeItems.map(([t, k, caps], i) => (
                <TreeRow key={t} $in={63} $caps={caps}>
                  <Dotted $x={30} /><Dotted $x={50} $end={i === treeItems.length - 1} /><Tick $x={50} $w={12} />
                  {k === "c" ? <TreeComp /> : <DiagramIc s={16} />}{t}
                </TreeRow>
              ))}
              <TreeRow $in={43}><Dotted $x={30} /><Tick $x={30} $w={12} /><Folder c="#c88fd0" d="#8a5a9c" />Deployment View</TreeRow>
              <TreeRow $in={43}><Dotted $x={30} /><Tick $x={30} $w={12} /><Folder c="#7ba5d8" d="#3f6a9c" />Entity Relationship Model</TreeRow>
              <TreeRow $in={43}><Dotted $x={30} /><Tick $x={30} $w={12} /><Expander $x={26} $open /><Folder c="#bcd880" d="#7f9c4a" />Logical View</TreeRow>
            </TreeBody>
            <ScrollBar>
              <ScrollBtn><Up /></ScrollBtn>
              <Thumb $mt={15} $h={40} />
              <Fill />
              <ScrollBtn><Down /></ScrollBtn>
            </ScrollBar>
          </Pane>
          <Splitter $h={9} />
          <DockTitle $h={22}>
            <DockName><u>D</u>ebug</DockName><MiniDock />
          </DockTitle>
          <Pane $h={178}>
            <Col>
              <DebugHead>Class Name</DebugHead>
              <TreeBody $mt={0}>
                {debugItems.map(([t, on], i) => (
                  <TreeRow key={i} $in={24} $alt={i % 2 === 1}>
                    <Dotted $x={10} /><Tick $x={16} $w={6} /><Expander $x={6} />
                    <Check>{on && <Tick2 />}</Check>
                    <DebugLabel>{t}</DebugLabel>
                  </TreeRow>
                ))}
              </TreeBody>
            </Col>
            <ScrollBar>
              <ScrollBtn $mt={1}><Up /></ScrollBtn>
              <Thumb $mt={2} $h={115} />
              <Fill />
              <ScrollBtn><Down /></ScrollBtn>
            </ScrollBar>
          </Pane>
          <Splitter $h={9} />
          <DockTitle $h={22}>
            <DockName>Doc<u>u</u>mentation</DockName><MiniDock />
          </DockTitle>
          <DocHead>
            <DocIcon><DiagramIc s={16} /></DocIcon>
            <DocBtn>component diagram</DocBtn>
            <DocCheck />
          </DocHead>
          <Pane $h={171} />
          <BottomTabs>
            <BottomTab $on $w={113}>Documentation</BottomTab>
            <BottomTab $w={132}>Command history</BottomTab>
            <BottomTab $w={47}>Log</BottomTab>
          </BottomTabs>
        </LeftDock>

        <Central>
          <TabBar>
            <CornerBtn><CornerIc /></CornerBtn>
            <DocTab $w={154} $pl={13}><DiagramIc kind="class" />class diagram<TabClose><TabX /></TabClose></DocTab>
            <DocTab $w={180} $pl={16}><DiagramIc kind="use" />use case diagram<TabClose><TabX /></TabClose></DocTab>
            <DocTab $w={191} $pl={14} $on><DiagramIc />component diagram<TabClose $on><TabX /></TabClose></DocTab>
          </TabBar>
          <Canvas>
            <Wires width="1404" height="834" viewBox={`${OX} ${OY} 1404 834`} fill="none" stroke="#ff1a1a">
              {links.map(([a, b, c, d, dash], i) => (
                <g key={i}>
                  <path d={`M${a} ${b}L${c} ${d}`} strokeDasharray={dash} />
                  <path d={head(a, b, c, d)} />
                </g>
              ))}
            </Wires>
            <DiagramTitle $x={775 - OX} $y={249 - OY}>COMPONENT DIAGRAM FOR LIBRARY MANAGEMENT SYSTEM</DiagramTitle>
            {nodes.map(n => (
              <UmlNode key={n.id} $x={n.x - OX} $y={n.y - OY} $w={n.r - n.x} $h={n.b - n.y}>
                {n.id}
                <NodeGlyph width="21" height="21" viewBox="0 0 21 21" fill="none" stroke="#ff1f1f">
                  <rect x="3.500" y=".5" width="17" height="20" strokeWidth="1.300" />
                  <rect x=".5" y="3.500" width="3" height="3" />
                  <rect x=".5" y="10.500" width="3" height="3" />
                </NodeGlyph>
              </UmlNode>
            ))}
          </Canvas>
        </Central>

        <RightDock>
          <DockTitle $h={22} $pr={4}>
            <DockName><u>B</u>ird's eye</DockName><MiniDock />
          </DockTitle>
          <BirdPane />
        </RightDock>
      </Workspace>

      <StatusBar>
        <StatusLabel>component diagram</StatusLabel>
        <StatusGroup>
          <Percent>148%</Percent>
          <ZoomBtns><ZoomBtn>Fit</ZoomBtn><ZoomBtn>100%</ZoomBtn></ZoomBtns>
        </StatusGroup>
        <ZoomIconBtn $w={24} $ml={8}><Lens /></ZoomIconBtn>
        <ZoomSlider><SliderKnob /></ZoomSlider>
        <ZoomIconBtn $w={24} $ml={9}><Lens plus /></ZoomIconBtn>
      </StatusBar>

      <Taskbar>
        <Weather>
          <SunIc />
          <WeatherText><WeatherTemp>31°C</WeatherTemp><WeatherSub>Mostly sunny</WeatherSub></WeatherText>
        </Weather>
        <StartIc />
        <SearchBox><Glass />Search</SearchBox>
        <AppRow>
          <AppCell><TaskView /></AppCell>
          <AppCell><ChatIc /></AppCell>
          <AppCell><FolderIc /><RunDot /></AppCell>
          <AppCell><EdgeIc /></AppCell>
          <AppCell><MailIc /></AppCell>
          <AppCell><HpIc /></AppCell>
          <AppCell><ZoomIc /></AppCell>
          <AppCell><CopilotIc /></AppCell>
          <AppCell><MysqlIc /></AppCell>
          <AppCell $on><SnipIc /><RunDot $wide /></AppCell>
          <AppCell><BlueWin /><RunDot /></AppCell>
          <AppCell><ChromeIc /><RunDot /></AppCell>
        </AppRow>
        <TrayCell $w={40} $ml={40}><Chevron /></TrayCell>
        <TrayCell $w={40}><CloudIc /></TrayCell>
        <TrayCell $w={38}><DropIc /></TrayCell>
        <TrayCell $w={60}><span>ENG</span><span>IN</span></TrayCell>
        <TrayCell $w={32}><WifiIc /></TrayCell>
        <TrayCell $w={29}><SpeakerIc /></TrayCell>
        <TrayCell $w={33}><BattIc /></TrayCell>
        <TrayCell $w={90} $end><span>09:24</span><span>21-08-2023</span></TrayCell>
        <TrayCell $w={50}><Badge>2</Badge></TrayCell>
      </Taskbar>
    </Shell>
  );
}
